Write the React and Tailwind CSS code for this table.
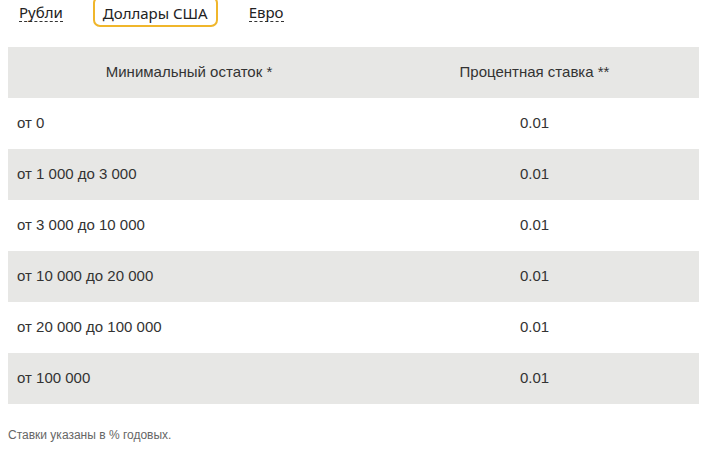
import React from 'react';

const rows = [
  ['от 0', '0.01'],
  ['от 1 000 до 3 000', '0.01'],
  ['от 3 000 до 10 000', '0.01'],
  ['от 10 000 до 20 000', '0.01'],
  ['от 20 000 до 100 000', '0.01'],
  ['от 100 000', '0.01'],
];

export default function App() {
  return (
    <div className="w-[705px] h-[454px] overflow-hidden bg-white">
      {/* Currency tabs */}
      <div className="flex items-center -mt-[4px] h-[31px] pl-[19px] font-['Noto_Sans',sans-serif] text-[15px] text-[#222]">
        <span className="border-b border-dashed border-[#333] leading-[18px] mt-[2px]">Рубли</span>
        <span className="ml-[30px] px-[8px] h-[31px] flex items-center border-2 border-[#f0b62b] rounded-[7px] pt-[3px]">
          Доллары США
        </span>
        <span className="ml-[31px] border-b border-dashed border-[#333] leading-[18px] mt-[2px]">Евро</span>
      </div>

      {/* Rates table */}
      <div className="mx-[8px] mt-[20px] w-[691px] font-['Liberation_Sans',Arial,sans-serif] text-[15px] text-[#333]">
        <div className="grid grid-cols-[362px_329px] h-[51px] items-center bg-[#e7e7e5]">
          <div className="text-center">Минимальный остаток *</div>
          <div className="text-center">Процентная ставка **</div>
        </div>
        {rows.map(([range, rate], i) => (
          <div
            key={i}
            className={`grid grid-cols-[362px_329px] h-[51px] items-center ${i % 2 === 1 ? 'bg-[#e7e7e5]' : 'bg-white'}`}
          >
            <div className="pl-[9px]">{range}</div>
            <div className="text-center">{rate}</div>
          </div>
        ))}
      </div>

      <p className="mt-[22px] ml-[8px] font-['Liberation_Sans',Arial,sans-serif] text-[12px] text-[#666]">
        Ставки указаны в % годовых.
      </p>
    </div>
  );
}
